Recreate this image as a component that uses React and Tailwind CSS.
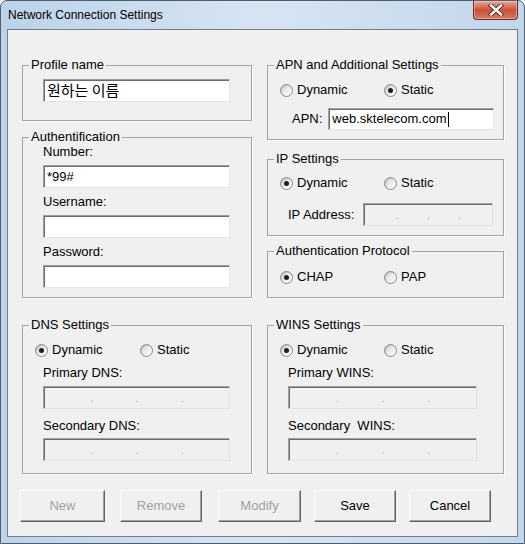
import React from "react";

function Radio({ checked, label, className = "" }) {
  return (
    <div className={"flex items-center h-[16px] " + className}>
      <span className="w-[13px] h-[13px] rounded-full border border-[#8a8a8a] bg-linear-to-br from-[#d2d2d2] via-[#ececec] to-white flex items-center justify-center shadow-[inset_1px_1px_1px_rgba(0,0,0,0.12)]">
        {checked && <span className="w-[5px] h-[5px] rounded-full bg-[#1e1e1e]" />}
      </span>
      <span className="ml-[4px] text-[13px] leading-[16px]">{label}</span>
    </div>
  );
}

const sunken =
  "border border-t-[#a0a0a0] border-l-[#a0a0a0] border-r-[#e3e3e3] border-b-[#e3e3e3] shadow-[inset_1px_1px_0_#6d6d6d]";

function IpBox({ className = "" }) {
  return (
    <div className={"h-[23px] bg-[#f0f0f0] grid grid-cols-4 pl-[4px] " + sunken + " " + className}>
      {[0, 1, 2].map((i) => (
        <span key={i} className="text-right text-[11px] leading-[22px] text-[#a8a8a8]">
          .
        </span>
      ))}
    </div>
  );
}

function Group({ title, className = "", children }) {
  return (
    <fieldset className={"border border-[#a3a3a3] shadow-[1px_1px_0_white] min-w-0 " + className}>
      <legend className="ml-[6px] px-[2px] text-[13px] leading-[16px]">{title}</legend>
      {children}
    </fieldset>
  );
}

function Button({ label, disabled, className = "" }) {
  return (
    <button
      className={
        "h-[32px] bg-[#f0f0f0] border border-t-white border-l-white border-r-[#646464] border-b-[#646464] shadow-[inset_-1px_-1px_0_#a0a0a0] text-[13px] " +
        (disabled ? "text-[#a0a0a0] " : "text-black ") +
        className
      }
    >
      {label}
    </button>
  );
}

export default function App() {
  return (
    <div className="w-[525px] h-[544px] font-['Liberation_Sans',Arial,sans-serif] text-black">
      <div className="w-full h-full rounded-t-[7px] border border-[#505d6b] bg-linear-to-r from-[#bcd2e9] via-[#d7e5f3] to-[#c2d6eb] flex flex-col">
        {/* Title bar */}
        <div className="h-[28px] flex items-start justify-between">
          <span className="ml-[7px] mt-[7px] text-[12px] leading-[14px]">Network Connection Settings</span>
          <div className="mr-[6px] w-[45px] h-[19px] rounded-b-[4px] border border-t-0 border-[#6b2b1f] bg-linear-to-b from-[#e8a797] via-[#c9503b] to-[#d67a62] flex items-center justify-center shadow-[inset_0_0_0_1px_rgba(255,255,255,0.35)]">
            <svg width="16" height="12" viewBox="0 0 16 12">
              <path d="M3 1.5 L13 10.5 M13 1.5 L3 10.5" stroke="#4a2a24" strokeWidth="4.2" strokeLinecap="square" />
              <path d="M3 1.5 L13 10.5 M13 1.5 L3 10.5" stroke="#ffffff" strokeWidth="2.4" strokeLinecap="square" />
            </svg>
          </div>
        </div>

        {/* Client area */}
        <div className="mx-[6px] mb-[6px] flex-1 bg-[#f0f0f0] border border-[#6f7f8e] flex flex-col pt-[27px] pl-[14px]">
          <div className="flex gap-[15px]">
            {/* Left column */}
            <div className="w-[230px] flex flex-col">
              <Group title="Profile name" className="h-[64px]">
                <div className="pl-[20px] pt-[6px]">
                  <div className={"w-[187px] h-[23px] bg-white flex items-center pl-[3px] text-[15px] font-['Noto_Sans_CJK_KR','Noto_Sans_CJK_SC',sans-serif] " + sunken}>
                    원하는 이름
                  </div>
                </div>
              </Group>

              <Group title="Authentification" className="h-[169px] mt-[8px]">
                <div className="pl-[20px] flex flex-col text-[13px]">
                  <span className="leading-[14px]">Number:</span>
                  <div className={"mt-[6px] w-[187px] h-[23px] bg-white flex items-center pl-[3px] " + sunken}>*99#</div>
                  <span className="mt-[7px] leading-[14px]">Username:</span>
                  <div className={"mt-[6px] w-[187px] h-[23px] bg-white " + sunken} />
                  <span className="mt-[7px] leading-[14px]">Password:</span>
                  <div className={"mt-[6px] w-[187px] h-[23px] bg-white " + sunken} />
                </div>
              </Group>

              <Group title="DNS Settings" className="h-[157px] mt-[19px]">
                <div className="flex flex-col text-[13px]">
                  <div className="pl-[12px] mt-[9px] flex">
                    <Radio checked label="Dynamic" className="w-[105px]" />
                    <Radio label="Static" />
                  </div>
                  <div className="pl-[20px] flex flex-col">
                    <span className="mt-[8px] leading-[14px]">Primary DNS:</span>
                    <IpBox className="mt-[6px] w-[187px]" />
                    <span className="mt-[10px] leading-[14px]">Secondary DNS:</span>
                    <IpBox className="mt-[5px] w-[187px]" />
                  </div>
                </div>
              </Group>
            </div>

            {/* Right column */}
            <div className="w-[237px] flex flex-col">
              <Group title="APN and Additional Settings" className="h-[83px]">
                <div className="flex flex-col text-[13px]">
                  <div className="pl-[12px] mt-[9px] flex">
                    <Radio label="Dynamic" className="w-[104px]" />
                    <Radio checked label="Static" />
                  </div>
                  <div className="pl-[24px] mt-[10px] flex items-center">
                    <span className="leading-[14px]">APN:</span>
                    <div className={"ml-[6px] w-[166px] h-[22px] bg-white flex items-center pl-[3px] " + sunken}>
                      web.sktelecom.com
                      <span className="ml-[1px] w-[1px] h-[15px] bg-black" />
                    </div>
                  </div>
                </div>
              </Group>

              <Group title="IP Settings" className="h-[85px] mt-[11px]">
                <div className="flex flex-col text-[13px]">
                  <div className="pl-[12px] mt-[8px] flex">
                    <Radio checked label="Dynamic" className="w-[104px]" />
                    <Radio label="Static" />
                  </div>
                  <div className="pl-[20px] mt-[12px] flex items-center">
                    <span className="leading-[14px] w-[75px]">IP Address:</span>
                    <IpBox className="w-[130px]" />
                  </div>
                </div>
              </Group>

              <Group title="Authentication Protocol" className="h-[55px] mt-[7px]">
                <div className="pl-[12px] mt-[10px] flex text-[13px]">
                  <Radio checked label="CHAP" className="w-[104px]" />
                  <Radio label="PAP" />
                </div>
              </Group>

              <Group title="WINS Settings" className="h-[157px] mt-[19px]">
                <div className="flex flex-col text-[13px]">
                  <div className="pl-[12px] mt-[9px] flex">
                    <Radio checked label="Dynamic" className="w-[104px]" />
                    <Radio label="Static" />
                  </div>
                  <div className="pl-[20px] flex flex-col">
                    <span className="mt-[8px] leading-[14px]">Primary WINS:</span>
                    <IpBox className="mt-[6px] w-[189px]" />
                    <span className="mt-[10px] leading-[14px] whitespace-pre">Secondary  WINS:</span>
                    <IpBox className="mt-[5px] w-[189px]" />
                  </div>
                </div>
              </Group>
            </div>
          </div>

          {/* Buttons */}
          <div className="flex mt-[16px] -ml-[2px]">
            <Button label="New" disabled className="w-[85px]" />
            <Button label="Remove" disabled className="ml-[15px] w-[82px]" />
            <Button label="Modify" disabled className="ml-[16px] w-[83px]" />
            <Button label="Save" className="ml-[13px] w-[82px]" />
            <Button label="Cancel" className="ml-[13px] w-[82px]" />
          </div>
        </div>
      </div>
    </div>
  );
}
